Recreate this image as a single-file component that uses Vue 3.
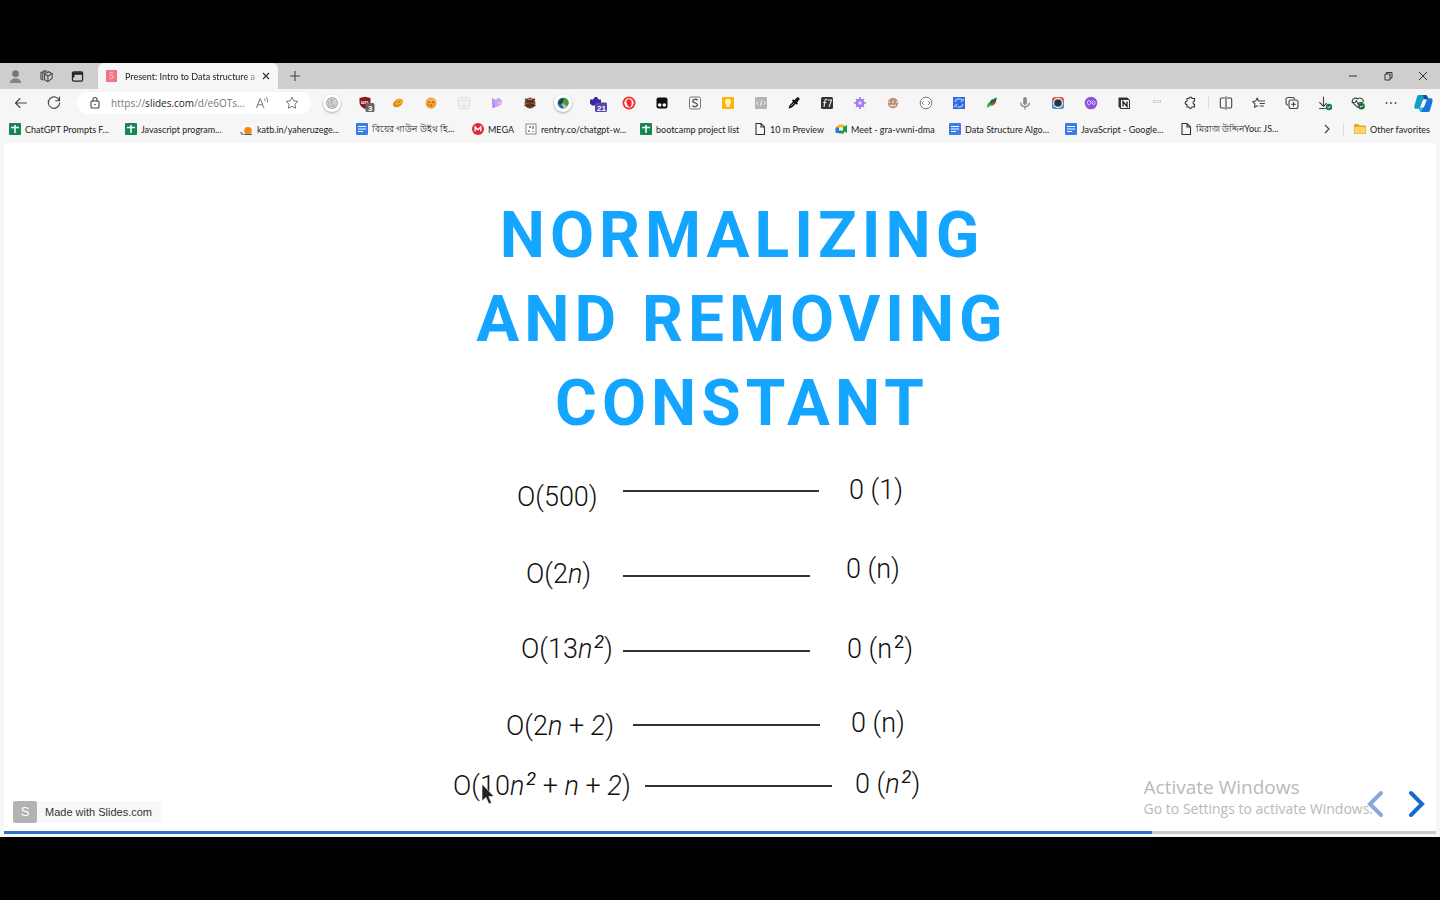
<script setup>
import { ref } from 'vue'

const address = ref('https://slides.com/d/e6OTs...')

const line = 'fill="none" stroke="#444" stroke-width="1.1" stroke-linecap="round" stroke-linejoin="round"'

const icons = {
  profile: '<circle cx="8" cy="5" r="3.6" fill="#777"/><path d="M2 15c0-7 12-7 12 0z" fill="#858585"/>',
  workspaces: `<g ${line}><path d="M6 5.500 10.500 3 14 5v5l-4.500 3.500L6 11.500z"/><path d="m6 5.500 3.500 2L14 5M9.500 7.500v6M4 11.800V4.500L8.500 2M4 11.800 2 10.500V4l4.500-2.500"/></g>`,
  tabs: '<rect x="2.600" y="3" width="10.800" height="10" rx="1.500" fill="none" stroke="#222" stroke-width="1.300"/><path d="M2.600 3.500h10.800v2.500H2.600zM2.600 6h2.200v3H2.600z" fill="#222"/>',
  back: `<path d="M13.500 8H2.500M7 3.500 2.500 8 7 12.500" ${line}/>`,
  reload: `<path d="M13.300 5.500A5.700 5.700 0 1 0 13.700 8M13.500 2v3.800H9.700" ${line}/>`,
  lock: `<g ${line}><rect x="4" y="6" width="8" height="7" rx="1"/><path d="M6 6V4.500a2 2 0 0 1 4 0V6"/></g><circle cx="8" cy="9.500" r=".8" fill="#444"/>`,
  aloud: '<path d="M2.500 13 6.200 3.500 10 13M3.900 9.800h4.700" fill="none" stroke="#777" stroke-width="1"/><path d="M10 3.500c1 .6 1.300 1.600 1 2.800M12 2.300c1.500 1 2 2.800 1.300 5" fill="none" stroke="#777"/>',
  star: '<path d="m8 2.200 1.800 3.700 4.100.5-3 2.800.8 4.100L8 11.300l-3.700 2 .8-4.100-3-2.800 4.100-.5z" fill="none" stroke="#777" stroke-width="1"/>',
  gauge: '<circle cx="8" cy="8" r="9" fill="#fff"/><circle cx="8" cy="8" r="6" fill="#aaa"/><circle cx="8" cy="8" r="4.500" fill="none" stroke="#ddd"/><path d="M6 5v4c0 2 3 2 3 0V5M11 5v5" stroke="#eee" fill="none"/>',
  shield: '<path d="M2.500 3 8 1.800 13.500 3v4c0 4-3 5.500-5.500 7-2.500-1.500-5.500-3-5.500-7z" fill="#8d1720"/><text x="4" y="9" font-size="6" font-weight="700" fill="#fff">uo</text><rect x="8.500" y="8" width="9" height="9" rx="1.500" fill="#666"/><text x="11" y="15.500" font-size="8" font-weight="700" fill="#fff">3</text>',
  coin: '<ellipse cx="8" cy="8" rx="5.500" ry="3.600" transform="rotate(-35 8 8)" fill="#df8b10"/><ellipse cx="9" cy="7" rx="3.500" ry="2.200" transform="rotate(-35 9 7)" fill="#ffb52c"/><path d="m7.500 8 3-2" stroke="#a96000"/>',
  cookie: '<circle cx="8" cy="8" r="5.500" fill="#eea03c"/><path d="M3 7c2-3 8-4 10-1" fill="#f8bd54"/><g fill="#a75a16"><circle cx="6" cy="7" r=".9"/><circle cx="10" cy="7" r=".9"/><circle cx="8" cy="10.500" r=".9"/><circle cx="5" cy="10" r=".7"/></g>',
  faint: '<rect x="2.500" y="2.500" width="11" height="11" rx="2" fill="#f1f1f1" stroke="#ddd"/><path d="M5 6c1-1.500 5-1.500 6 0M5 10c1 1.500 5 1.500 6 0" fill="none" stroke="#ddd"/>',
  fan: '<path d="M3 3 7 4.500 9.500 2.500 13.500 6 12 10 7.500 12 3.500 13z" fill="#cba4f5"/><path d="M3 3c2 2 3 6 3 9l-2.500 1z" fill="#a98df5"/><path d="m8 8 5-2-2 4z" fill="#f2b6e5"/>',
  ladybug: '<circle cx="8" cy="8" r="5.500" fill="#8a5538"/><path d="m3 4 2 1M13 4l-2 1M2.500 11l2-1M13.500 11l-2-1M8 3v10" stroke="#412619" stroke-width="1.200"/><g fill="#3c241b"><circle cx="5.800" cy="6.500" r="1.200"/><circle cx="10.300" cy="6.500" r="1.200"/><circle cx="6" cy="10.500" r="1.200"/><circle cx="10.300" cy="10.300" r="1.200"/></g><path d="M6 4.200h4" stroke="#d9a47c"/>',
  globe: '<circle cx="8" cy="8" r="9" fill="#fff"/><circle cx="8" cy="8" r="5.500" fill="#6aa5df"/><path d="M3 9c0-5 4-6.500 7-5.500L7 9z" fill="#27453a"/><path d="M9 3c5 0 6 6 3 8L8 8z" fill="#3da03a"/><path d="m7 8 4 3-2 2.500z" fill="#ffc727"/><path d="M3 9c1 4 4 5 6 4.500L6 9z" fill="#2a62b8"/>',
  house: '<path d="M2 8.500V4.500h3L7 2h2l1.500 2.500H13v6H4z" fill="#3926a3"/><rect x="7" y="7.500" width="12" height="9.500" rx="1.500" fill="#5945ad"/><text x="9" y="15.500" font-size="8" font-weight="700" fill="#fff">21</text>',
  stop: '<circle cx="8" cy="8" r="6.500" fill="#ee2c24"/><circle cx="8" cy="8" r="4.700" fill="#fff"/><path d="M5.300 8V5.500h1V4.500h1V4h1.300v.6h1v1h1V9c0 4-4.500 4-4.700-1z" fill="#ee2c24"/>',
  tamper: '<rect x="2.500" y="2.500" width="11" height="11" rx="2" fill="#111"/><circle cx="5.700" cy="10" r="1.800" fill="#fff"/><circle cx="10.300" cy="10" r="1.800" fill="#fff"/>',
  sbox: '<rect x="2.500" y="2" width="11" height="12" rx="1.500" fill="#f7f7f7" stroke="#777"/><path d="M10.600 5.200C9.500 3.800 5.700 4 5.700 6c0 2.300 4.800 1.300 4.800 3.800 0 2.200-4 2.500-5.100.8" fill="none" stroke="#555" stroke-width="1.400"/>',
  keep: '<rect x="2" y="2" width="12" height="12" rx="1" fill="#fbb60d"/><circle cx="8" cy="7" r="3" fill="#fff4bd"/><path d="M6.500 9h3v3h-3z" fill="#fff4bd"/>',
  code: '<rect x="2" y="2" width="12" height="12" rx="1" fill="#b5b5b5"/><path d="m5.500 6-2 2 2 2M10.500 6l2 2-2 2M8.800 5l-1.500 6" fill="none" stroke="#eee"/>',
  pipette: '<path d="m2.500 13.500 1-3L8 5.500l3-3c1.500-1 3 .5 2.500 2L11 7.500 6 12.500z" fill="#111"/><path d="m6.500 5 5 4" stroke="#111" stroke-width="1.800"/><path d="m5 11 3-3" stroke="#999"/>',
  fq: '<rect x="2" y="2" width="12" height="12" rx="1.500" fill="#333"/><path d="M8 4.500c-2-.7-2 1-2.300 3L5 12M4 7.500h3.500M8.500 5h4L10 12" fill="none" stroke="#eee" stroke-width="1.100"/>',
  gear: '<circle cx="8" cy="8" r="4.300" fill="#a17bec"/><path d="M8 2v12M2 8h12M4 4l8 8M12 4l-8 8" stroke="#a17bec" stroke-width="1.700"/><circle cx="8" cy="8" r="1.800" fill="#e3d9ff"/>',
  face: '<circle cx="8" cy="8" r="5.200" fill="#bf9275"/><path d="M3.500 6h9v2h-9z" fill="#eed0b2"/><path d="M5 7h2M9 7h2" stroke="#555"/><path d="M5 10.500h6" stroke="#f0dcc8" stroke-width="1.400"/>',
  braces: '<circle cx="8" cy="8" r="5.800" fill="#fff" stroke="#777"/><path d="m6 6-2 2 2 2M10 6l2 2-2 2" fill="none" stroke="#888"/>',
  sync: '<rect x="2" y="2" width="12" height="12" fill="#3568dd"/><path d="M4 7c1-4 6-4 8-1M12 9c-1 4-6 4-8 1M3 12l3-3M13 4l-3 3" fill="none" stroke="#9bc7ff" stroke-width="1.200"/>',
  rocket: '<path d="M3 13 3.500 9l4-4L10 8l-4 3z" fill="#18b553"/><path d="m7 5 6-2.500L11.500 8 9 10.500 6.500 8z" fill="#28623a"/><path d="m8 8 4-1.500L9.500 10l-3 1z" fill="#e0382b"/>',
  mic: '<rect x="6.200" y="2" width="3.600" height="8" rx="1.800" fill="#888"/><path d="M3.800 7.500c0 5.500 8.400 5.500 8.400 0M8 11.500v3" fill="none" stroke="#888" stroke-width="1.300"/>',
  camera: '<rect x="2" y="2" width="12" height="12" rx="3" fill="#e3574b"/><path d="M2 8h12v3a3 3 0 0 1-3 3H5a3 3 0 0 1-3-3z" fill="#3799d5"/><circle cx="8" cy="8" r="4.900" fill="#fff"/><circle cx="8" cy="8" r="3.800" fill="#263746"/>',
  purple: '<circle cx="8" cy="8" r="6.300" fill="#8a54df"/><path d="M5 9c-2-2 1-5 3-2s4 3 4 1-2-3-4 0-3 2-3 1z" fill="none" stroke="#efd9ff"/>',
  notion: '<path d="M2.500 2.500H11l3 2.500v9H4.500l-2-2.500z" fill="#333"/><path d="M5 5h8v8H5z" fill="#f7f7f7"/><path d="M7 11.500v-5l4 5v-5" fill="none" stroke="#222" stroke-width="1.300"/>',
  dash: '<path d="M4 5.500h8v2H4z" fill="#bbb"/><path d="M5 6.500h6" stroke="#eee"/>',
  puzzle: '<path d="M5 3.500h2c.1-2 3-2 3 0h2.500V6c-2 .2-2 3.200 0 3.400V12H10c-.2 2-2.900 2-3 0H5V9.500c-2.500 0-2.500-3.300 0-3.300z" fill="none" stroke="#333" stroke-width="1.100"/>',
  split: `<path d="M6.500 3H3.500c-.8 0-1.200.4-1.200 1.200v7.600c0 .8.4 1.200 1.200 1.200h3M9.500 3h3c.8 0 1.200.4 1.200 1.200v7.600c0 .8-.4 1.200-1.200 1.200h-3M8 1.800v12.400" ${line}/>`,
  favs: `<path d="m7.500 6-1.300-3-1.500 3-3 .5L4 8.800l-.6 3.500 3.300-1.600M7.500 6h6.200M9 8.500h4.500M9 11h3.500" ${line}/>`,
  collections: `<g ${line}><rect x="5" y="5" width="9" height="8.500" rx="2"/><path d="M3.500 10C2 9.500 2 8.500 2 7.500V4.500c0-1.500 1-2 2-2h4.500c1 0 2 .5 2 1.500M9.500 7.200v4M7.500 9.200h4"/></g>`,
  download: `<path d="M6.500 2v9M2.700 7.500l3.800 3.800 3-3M2.500 13.500h6" ${line}/><circle cx="12" cy="12" r="3.200" fill="#16794d"/><path d="m10.500 12 1.200 1 1.800-2" fill="none" stroke="#fff"/>`,
  heart: `<path d="M8 12.500 2.800 7.800C1 5 4.500 1.500 7.500 4c3-2.500 6.500.5 5.500 3M2 7.500h3l1.300-2 2 4 1-2H12" ${line}/><circle cx="11.500" cy="11.200" r="3.300" fill="#176c28"/><path d="m10 11.200 1.200 1 1.800-2" fill="none" stroke="#fff"/>`,
  dots: '<g fill="#444"><circle cx="3.500" cy="8" r=".9"/><circle cx="8" cy="8" r=".9"/><circle cx="12.500" cy="8" r=".9"/></g>',
  copilot: '<path d="M3.500 0h6c2 0 2 2 3 4h-4c-2 0-3 9-5 9H1c-3 0-1-5 .5-10C2 1 2.500 0 3.500 0z" fill="#149fbe"/><path d="M12.500 16h-6c-2 0-2-2-3-4h4c2 0 3-9 5-9H15c3 0 1 5-.5 10-.5 2-1 3-2 3z" fill="#1576d8"/><path d="M7 0h3c1.500 0 2 2 2.500 4H9z" fill="#164db5"/><path d="M6 16H5l-1.500-4h4z" fill="#25c2de"/>',
  sheet: '<rect x="2" y="2" width="12" height="12" rx="1" fill="#178554"/><path d="M4 6.500h8M8 4v8" stroke="#fff" stroke-width="1.500"/>',
  doc: '<rect x="2" y="2" width="12" height="12" rx="1" fill="#3b7de8"/><path d="M4 5.500h8M4 8h8M4 10.500h5" stroke="#fff" stroke-width="1.200"/>',
  kat: '<path d="m1.500 10.500 3.500 3H2z" fill="#555"/><circle cx="9" cy="9.800" r="3.800" fill="#f08a17"/><path d="M5 13.500h8" fill="none" stroke="#435c7b"/>',
  mega: '<circle cx="8" cy="8" r="6" fill="#e32636"/><path d="M5.200 10.300V6L8 8.700 10.800 6v4.300" fill="none" stroke="#fff" stroke-width="1.400"/>',
  rentry: '<rect x="3" y="3" width="10" height="10" fill="#fff" stroke="#888"/><path d="M6 6h2M10 5v3M6 9v2M10 10v1" stroke="#666" stroke-width="1.300"/>',
  page: '<path d="M4 2.500h5l3.500 3.500v7.500H4zM9 2.500V6h3.500" fill="none" stroke="#333" stroke-width="1.100"/>',
  meet: '<path d="M3 6 6 3.500h5V7H3z" fill="#f7b817"/><path d="M2.500 6.500H6V12H3.500c-.6 0-1-.4-1-1z" fill="#2878e5"/><path d="M6 9h5v3.500H6zM10 6l4-2v8l-4-2z" fill="#1b9a50"/><path d="M6 6.500h4V9.500H6z" fill="#fff"/>',
  folder: '<path d="M2 4c0-.6.4-1 1-1h3l1.500 1.500H13c.6 0 1 .4 1 1V12c0 .6-.4 1-1 1H3c-.6 0-1-.4-1-1z" fill="#e2a62b"/><path d="M2.500 6h11v6.500h-11z" fill="#ffd463"/>',
}

const extensions = [
  ['gauge', 'Reading meter'], ['shield', 'Blocker'], ['coin', 'Coin'], ['cookie', 'Cookies'],
  ['faint', 'Disabled'], ['fan', 'Palette'], ['ladybug', 'Debugger'], ['globe', 'Downloader'],
  ['house', 'Home'], ['stop', 'Ad stopper'], ['tamper', 'Scripts'], ['sbox', 'Styles'],
  ['keep', 'Notes'], ['code', 'Source'], ['pipette', 'Color picker'], ['fq', 'Font finder'],
  ['gear', 'Tools'], ['face', 'Avatar'], ['braces', 'JSON'], ['sync', 'Sync'],
  ['rocket', 'Launcher'], ['mic', 'Voice'], ['camera', 'Recorder'], ['purple', 'Loop'],
  ['notion', 'Clipper'], ['dash', 'Minimal'], ['puzzle', 'Extensions'],
]

const tools = [
  ['split', 'Split screen'], ['favs', 'Favorites'], ['collections', 'Collections'],
  ['download', 'Downloads'], ['heart', 'Browser essentials'], ['dots', 'More'],
]

const bookmarks = [
  { icon: 'sheet', label: 'ChatGPT Prompts F...', width: 116 },
  { icon: 'sheet', label: 'Javascript program...', width: 116 },
  { icon: 'kat', label: 'katb.in/yaheruzege...', width: 115 },
  { icon: 'doc', label: 'বিয়ের গাউন উইথ হি...', width: 116 },
  { icon: 'mega', label: 'MEGA', width: 53 },
  { icon: 'rentry', label: 'rentry.co/chatgpt-w...', width: 115 },
  { icon: 'sheet', label: 'bootcamp project list', width: 114 },
  { icon: 'page', label: '10 m Preview', width: 81 },
  { icon: 'meet', label: 'Meet - gra-vwni-dma', width: 114 },
  { icon: 'doc', label: 'Data Structure Algo...', width: 116 },
  { icon: 'doc', label: 'JavaScript - Google...', width: 115 },
  { icon: 'page', label: 'মিরাজ উদ্দিনYou: JS...', width: 116 },
]

// Slide objects: x is measured from the slide's centre line, y from its top.
const formulas = [
  { x: -203, y: 354, html: 'O(500)' },
  { x: 129, y: 347, html: '0 (1)' },
  { x: -194, y: 431, html: 'O(2<i>n</i>)' },
  { x: 126, y: 426, html: '0 (n)' },
  { x: -199, y: 506, html: 'O(13<i>n</i><sup><i>2</i></sup>)' },
  { x: 127, y: 506, html: '0 (n<sup>2</sup>)' },
  { x: -214, y: 583, html: 'O(2<i>n</i> + <i>2</i>)' },
  { x: 131, y: 580, html: '0 (n)' },
  { x: -267, y: 643, html: 'O(10<i>n</i><sup><i>2</i></sup> + <i>n</i> + <i>2</i>)' },
  { x: 135, y: 641, html: '0 (<i>n</i><sup><i>2</i></sup>)' },
]
const rules = [
  { x: -97, y: 347, w: 196 },
  { x: -97, y: 432, w: 187 },
  { x: -97, y: 507, w: 187 },
  { x: -87, y: 581, w: 187 },
  { x: -75, y: 642, w: 187 },
]
const at = (o) => ({ left: `calc(50% + ${o.x}px)`, top: `${o.y}px`, width: o.w ? `${o.w}px` : undefined })
</script>

<template>
  <div class="screen">
    <div class="window">
      <header class="titlebar">
        <button class="icon-btn head" aria-label="Profile"><svg viewBox="0 0 16 16" v-html="icons.profile" /></button>
        <button class="icon-btn head" aria-label="Workspaces"><svg viewBox="0 0 16 16" v-html="icons.workspaces" /></button>
        <button class="icon-btn head" aria-label="Tab actions"><svg viewBox="0 0 16 16" v-html="icons.tabs" /></button>
        <div class="tab">
          <span class="favicon">S</span>
          <span class="tab-title">Present: Intro to Data structure a</span>
          <button class="tab-close" aria-label="Close tab">
            <svg viewBox="0 0 16 16"><path d="m5 5 6 6M11 5l-6 6" fill="none" stroke="#333" stroke-width="1.200" /></svg>
          </button>
        </div>
        <button class="icon-btn" aria-label="New tab">
          <svg viewBox="0 0 16 16"><path d="M8 3v10M3 8h10" fill="none" stroke="#444" stroke-width="1.100" /></svg>
        </button>
        <div class="controls">
          <button class="icon-btn" aria-label="Minimize"><svg viewBox="0 0 16 16"><path d="M4 8h8" stroke="#333" /></svg></button>
          <button class="icon-btn" aria-label="Restore">
            <svg viewBox="0 0 16 16"><path d="M5 6h5v6H5zM6.500 6V4.500h5.500V10h-2" fill="none" stroke="#333" /></svg>
          </button>
          <button class="icon-btn" aria-label="Close"><svg viewBox="0 0 16 16"><path d="m4 4 8 8M12 4l-8 8" stroke="#333" /></svg></button>
        </div>
      </header>

      <div class="toolbar">
        <button class="icon-btn" aria-label="Back"><svg viewBox="0 0 16 16" v-html="icons.back" /></button>
        <button class="icon-btn" aria-label="Reload"><svg viewBox="0 0 16 16" v-html="icons.reload" /></button>
        <div class="address">
          <svg viewBox="0 0 16 16" v-html="icons.lock" />
          <label class="url">
            <input v-model="address" aria-label="Address" type="text">
            <span class="url-text" aria-hidden="true">https://<b>slides.com</b>/d/e6OTs...</span>
          </label>
          <button class="plain" aria-label="Read aloud"><svg viewBox="0 0 16 16" v-html="icons.aloud" /></button>
          <button class="plain" aria-label="Add to favorites"><svg viewBox="0 0 16 16" v-html="icons.star" /></button>
        </div>
        <div class="extensions">
          <button v-for="[name, label] in extensions" :key="name" class="icon-btn" :class="{ raised: name === 'gauge' || name === 'globe' }" :aria-label="label">
            <svg viewBox="0 0 16 16" v-html="icons[name]" />
          </button>
        </div>
        <span class="divider" />
        <div class="tools">
          <button v-for="[name, label] in tools" :key="name" class="icon-btn" :aria-label="label">
            <svg viewBox="0 0 16 16" v-html="icons[name]" />
          </button>
        </div>
        <button class="icon-btn copilot" aria-label="Copilot"><svg viewBox="0 0 16 16" v-html="icons.copilot" /></button>
      </div>

      <nav class="bookmarks">
        <a v-for="b in bookmarks" :key="b.label" href="#" :style="{ width: b.width + 'px' }">
          <svg viewBox="0 0 16 16" v-html="icons[b.icon]" /><span>{{ b.label }}</span>
        </a>
        <button class="icon-btn more" aria-label="More bookmarks">
          <svg viewBox="0 0 16 16"><path d="m6 4 4 4-4 4" fill="none" stroke="#444" stroke-width="1.200" /></svg>
        </button>
        <span class="divider" />
        <a href="#" class="other"><svg viewBox="0 0 16 16" v-html="icons.folder" /><span>Other favorites</span></a>
      </nav>

      <main class="slide">
        <h1>Normalizing<br>and Removing<br>Constant</h1>
        <p v-for="(f, i) in formulas" :key="'f' + i" class="formula" :style="at(f)" v-html="f.html" />
        <span v-for="(r, i) in rules" :key="'r' + i" class="rule" :style="at(r)" />
        <svg class="cursor" viewBox="0 0 14 22"><path d="M1 1v17l4-3.500L8 21l2.500-1.200L7.800 13.500H13z" fill="#222" stroke="#fff" stroke-width=".6" /></svg>
        <a href="#" class="made"><b>S</b><span>Made with Slides.com</span></a>
        <div class="watermark">
          <p class="wm-title">Activate Windows</p>
          <p class="wm-text">Go to Settings to activate Windows.</p>
        </div>
        <div class="arrows">
          <button aria-label="Previous slide" class="prev"><svg viewBox="0 0 18 30"><path d="M15 4 4 15l11 11" /></svg></button>
          <button aria-label="Next slide"><svg viewBox="0 0 18 30"><path d="m3 4 11 11L3 26" /></svg></button>
        </div>
        <div class="progress"><span /></div>
      </main>
    </div>
  </div>
</template>

<style>
body { margin: 0; background: #000; }
.formula i { font-style: italic; }
.formula sup { margin-left: 2px; font-size: 18px; font-weight: 400; line-height: 0; vertical-align: 10px; }
.screen svg text { font-family: "Liberation Sans", sans-serif; }
</style>

<style scoped>
.screen {
  box-sizing: border-box;
  min-height: 100vh;
  padding: 63px 0;
  display: flex;
  background: #000;
  font-family: Lato, "Noto Sans", sans-serif;
  font-size: 9px;
  color: #222;
}
.window { flex: 1; min-width: 0; display: flex; flex-direction: column; background: #f6f6f6; }
button { margin: 0; padding: 0; border: 0; background: none; font: inherit; color: inherit; }
svg { display: block; width: 16px; height: 16px; flex: none; overflow: visible; }
a { color: inherit; text-decoration: none; }
.icon-btn { width: 33px; display: flex; align-items: center; justify-content: center; flex: none; }
.titlebar { display: flex; height: 26px; background: #cfcdce; }
.head { width: 31px; }
.titlebar .head svg { width: 15px; height: 15px; }
.tab {
  width: 180px;
  margin-left: 5px;
  padding: 0 4px 0 8px;
  box-sizing: border-box;
  display: flex;
  align-items: center;
  border-radius: 6px 6px 0 0;
  background: #f6f6f6;
}
.favicon { width: 12px; height: 12px; line-height: 12px; text-align: center; background: #f47380; color: #ffc8cc; }
.tab-title {
  flex: 1;
  margin-left: 8px;
  white-space: nowrap;
  -webkit-mask-image: linear-gradient(90deg, #000 92%, #0006);
  mask-image: linear-gradient(90deg, #000 92%, #0006);
}
.tab-close { margin-left: 3px; }
.controls { margin-left: auto; display: flex; }
.controls .icon-btn { width: 35px; }
.toolbar { display: flex; height: 28px; align-items: center; padding-left: 4px; }
.address {
  width: 234px;
  height: 22px;
  margin-left: 7px;
  padding: 0 11px 0 10px;
  box-sizing: border-box;
  display: flex;
  align-items: center;
  border-radius: 11px;
  background: #fff;
}
.url { position: relative; flex: 1; min-width: 0; margin: 0 10px 0 8px; font: 10px/14px "Open Sans", sans-serif; }
.url input { width: 100%; padding: 0; border: 0; outline: 0; background: none; font: inherit; color: transparent; display: block; }
.url-text { position: absolute; inset: 0; white-space: nowrap; color: #777; pointer-events: none; }
.url-text b { font-weight: 400; color: #222; }
.plain + .plain { margin-left: 14px; }
.extensions { display: flex; margin-left: 4px; }
.raised svg { border-radius: 50%; filter: drop-shadow(0 1px 1px #aaa); }
.divider { width: 1px; height: 12px; background: #ddd; flex: none; }
.toolbar .divider { margin: 0 0 0 2px; }
.tools { display: flex; }
.copilot svg { width: 17px; height: 17px; }
.bookmarks { display: flex; height: 24px; align-items: center; padding: 0 0 2px 7px; }
.bookmarks a { display: flex; align-items: center; gap: 2px; white-space: nowrap; flex: none; }
.bookmarks .more { margin-left: auto; }
.bookmarks .divider { margin: 0 8px 0 0; }
.bookmarks .other { padding-right: 10px; }
.slide { position: relative; flex: 1; margin: 0 4px 3px; background: #fff; overflow: hidden; }
h1 {
  margin: 51px 0 0 44px;
  text-align: center;
  text-transform: uppercase;
  font: 700 64px/84px Roboto, "Open Sans", sans-serif;
  letter-spacing: 5px;
  color: #13a5ff;
}
.formula {
  position: absolute;
  margin: 0;
  transform: translateY(-50%);
  white-space: pre;
  font: 300 27px/32px Roboto, "Open Sans", sans-serif;
  color: #111;
}
.rule { position: absolute; height: 2px; background: #333; }
.cursor { position: absolute; left: calc(50% - 239px); top: 640px; width: 14px; height: 22px; }
.made {
  position: absolute;
  left: 9px;
  bottom: 11px;
  display: flex;
  padding-right: 9px;
  border-radius: 3px;
  background: #f8f8f9;
  font: 11px/22px "Liberation Sans", sans-serif;
  color: #333;
}
.made b { width: 24px; margin-right: 8px; border-radius: 2px; background: #b3b3b3; color: #fff; text-align: center; font-weight: 400; font-size: 13px; }
.arrows { position: absolute; right: 10px; bottom: 15px; display: flex; gap: 24px; }
.arrows svg { width: 18px; height: 30px; fill: none; stroke: #1769d2; stroke-width: 4px; stroke-linecap: round; }
.arrows .prev svg { stroke: #87a9dc; }
.watermark { position: absolute; right: 63px; bottom: 15px; color: #b9b9b9; white-space: nowrap; font-family: "Open Sans", sans-serif; }
.watermark p { margin: 0; }
.wm-title { font-size: 19px; line-height: 24px; }
.wm-text { font-size: 14px; line-height: 20px; }
.progress { position: absolute; left: 0; right: 0; bottom: 0; height: 3px; background: #ccc; }
.progress span { display: block; width: 80.2%; height: 100%; background: #2d70cc; }
</style>
